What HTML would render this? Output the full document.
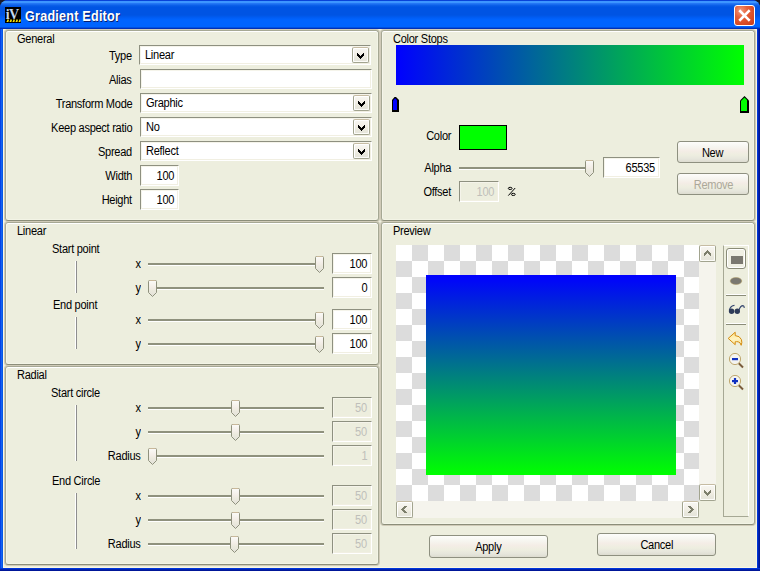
<!DOCTYPE html>
<html><head><meta charset="utf-8">
<style>
*{box-sizing:border-box;margin:0;padding:0}
html,body{width:760px;height:571px;overflow:hidden;background:#1a1a2a}
body{position:relative;font-family:"Liberation Sans",sans-serif;font-size:11px;color:#000}
.a{position:absolute}
#win{position:absolute;left:0;top:0;width:760px;height:571px;border-radius:8px 8px 0 0;overflow:hidden;background:#0054e3}
#title{position:absolute;left:0;top:0;width:760px;height:29px;background:linear-gradient(to bottom,#0842d8 0px,#0842d8 1px,#3d95ff 1px,#3d95ff 3px,#2a7cf8 3px,#0a5ee8 5.5px,#0054e3 7px,#0054e3 15px,#005ef6 18px,#0064ff 20px,#0064ff 27px,#0050e0 27px,#0050e0 28px,#0030b8 28px,#0030b8 29px)}
#frameL{position:absolute;left:0;top:29px;width:3px;height:542px;background:linear-gradient(to right,#0032e0,#1262f2 50%,#0050e0)}
#frameR{position:absolute;right:0;top:29px;width:3px;height:542px;background:linear-gradient(to right,#0040e8,#0022b0 50%,#00108c)}
#frameB{position:absolute;left:0;top:568px;width:760px;height:3px;background:linear-gradient(to bottom,#0040f0,#0022b0 50%,#00108c)}
#client{position:absolute;left:3px;top:29px;width:754px;height:539px;background:#edeede;border:1px solid #fbf7e2;border-top-color:#faf6e0}
.ttl{position:absolute;left:25px;top:8px;font-weight:bold;font-size:14px;color:#fff;text-shadow:1px 1px 0 #0a1e6e;letter-spacing:0.25px;line-height:17px;transform:scaleX(0.9);transform-origin:0 0}
.gb{position:absolute;border:1px solid #a6a894;border-bottom-color:#8c8e7a;border-radius:3px;box-shadow:0 0 0 1px #d0cbb8,inset 0 1px 0 #fff,inset 1px 0 0 #f5f5ea,inset -1px -1px 0 #f3f4e6}
.lbl{position:absolute;line-height:15px;white-space:nowrap;letter-spacing:-0.3px;font-size:12px;transform:scaleX(0.92);transform-origin:0 0}
.lbl.r{transform-origin:100% 0}
.t{display:inline-block;transform:scaleX(0.92);transform-origin:0 0}
.num .t{transform-origin:100% 0}
.btn .t{transform-origin:50% 0}
.r{text-align:right}
.tb{position:absolute;background:#fff;border:1px solid;border-color:#8e9080 #fff #fff #8e9080;box-shadow:inset 1px 1px 0 #f5f4ea,inset -1px -1px 0 #f1efe2;line-height:20px;white-space:nowrap;letter-spacing:-0.3px;font-size:12px}
.tb.num{text-align:right;padding-right:4px}
.tb.dis{background:#edeede;color:#bfbfba}
.cb{padding-left:5px;line-height:18px}
.dd{position:absolute;width:17px;height:16px;border:1px solid #a2a48f;border-top-color:#c6bca3;border-radius:2px;background:linear-gradient(to bottom,#f7f7f2 0%,#f4f1ea 35%,#efede2 55%,#e8e7dc 75%,#e6e5dc 100%);box-shadow:inset 1px 1px 0 #fff,inset -1px -1px 0 #fcfcf8}
.dd svg{position:absolute;left:4px;top:5px}
.vl{position:absolute;width:1px;background:#8e8e8e;box-shadow:-1px 0 0 #fff}
.trk{position:absolute;height:3px;border-top:2px solid #8f917d;border-bottom:1px solid #fff}
.btn{position:absolute;border:1px solid #8e9080;border-radius:3px;background:linear-gradient(to bottom,#fdfdfb 0%,#f6f5ef 25%,#f4ede6 45%,#eeeee0 65%,#e6e6dc 85%,#dddcd0 100%);text-align:center;letter-spacing:-0.3px;font-size:12px}
.chk{position:absolute;background:conic-gradient(#dcdcdc 0 25%,#fff 0 50%,#dcdcdc 0 75%,#fff 0);background-size:32px 32px}
.sbb{position:absolute;width:17px;height:17px;border:1px solid #a2a48f;border-top-color:#c6bca3;border-radius:2px;background:linear-gradient(to bottom,#f7f7f2 0%,#f4f1ea 35%,#efede2 55%,#e8e7dc 75%,#e6e5dc 100%);box-shadow:inset 1px 1px 0 #fff,inset -1px -1px 0 #fcfcf8}
.sbb svg{position:absolute;display:block}
</style></head><body>
<svg width="0" height="0" style="position:absolute"><defs><linearGradient id="tg" x1="0" y1="0" x2="0" y2="1"><stop offset="0" stop-color="#fbfbf8"/><stop offset="0.45" stop-color="#f3ede6"/><stop offset="0.6" stop-color="#eceade"/><stop offset="1" stop-color="#e2e1d8"/></linearGradient>
<g id="thumb"><path d="M0.5 1.5 Q0.5 0.5 1.5 0.5 H7.5 Q8.5 0.5 8.5 1.5 V12.5 L4.5 16.5 L0.5 12.5 Z" fill="url(#tg)" stroke="#8f917d"/><path d="M1.5 0.5 H7.5" stroke="#c9b89a"/></g></defs></svg>
<div id="win">
<div id="title"></div>
<div id="frameL"></div><div id="frameR"></div><div id="frameB"></div>
<div id="client"></div>

<!-- title icon -->
<svg class="a" style="left:5px;top:7px" width="16" height="16" viewBox="0 0 16 16">
<rect x="0" y="0" width="16" height="16" fill="#000"/>
<text x="0.8" y="11.9" font-family="Liberation Serif" font-weight="bold" font-size="14" fill="#c4d8ee" letter-spacing="-0.6">iV</text>
<g fill="#ffe800"><path d="M2.2 12.6h1.6v1.6l-0.8 0.8h-1.8l0.9-0.9z"/><path d="M5.2 12.6h1.6v1.6l-0.8 0.8h-1.8l0.9-0.9z"/><path d="M8.2 12.6h1.6v1.6l-0.8 0.8h-1.8l0.9-0.9z"/><path d="M11.2 12.6h1.6v1.6l-0.8 0.8h-1.8l0.9-0.9z"/><path d="M14.2 12.6h1.6v1.6l-0.8 0.8h-1.8l0.9-0.9z"/></g>
</svg>
<div class="ttl">Gradient Editor</div>

<!-- close button -->
<div class="a" style="left:734px;top:5px;width:21px;height:21px;border:1px solid #fff;border-radius:3px;background:radial-gradient(circle at 30% 25%,#f39a7c 0%,#e5603a 35%,#d84b24 70%,#c43c1a 100%)"></div>
<svg class="a" style="left:734px;top:5px" width="21" height="21" viewBox="0 0 21 21"><path d="M6.2 6.2 L14.8 14.8 M14.8 6.2 L6.2 14.8" stroke="#fff" stroke-width="2.6" stroke-linecap="square"/></svg>

<!-- group boxes -->
<div class="gb" style="left:5px;top:30px;width:374px;height:191px"></div>
<div class="gb" style="left:5px;top:222px;width:374px;height:143px"></div>
<div class="gb" style="left:5px;top:366px;width:374px;height:199px"></div>
<div class="gb" style="left:381px;top:30px;width:374px;height:191px"></div>
<div class="gb" style="left:381px;top:222px;width:374px;height:303px"></div>

<!-- General -->
<div class="lbl" style="left:17px;top:32px">General</div>
<div class="lbl r" style="right:628px;top:49px">Type</div>
<div class="lbl r" style="right:628px;top:73px">Alias</div>
<div class="lbl r" style="right:628px;top:97px">Transform Mode</div>
<div class="lbl r" style="right:628px;top:121px">Keep aspect ratio</div>
<div class="lbl r" style="right:628px;top:145px">Spread</div>
<div class="lbl r" style="right:628px;top:169px">Width</div>
<div class="lbl r" style="right:628px;top:193px">Height</div>

<div class="tb cb" style="left:139px;top:45px;width:232px;height:20px"><span class="t">Linear</span></div>
<div class="dd" style="left:352px;top:47px"><svg width="7" height="6" shape-rendering="crispEdges"><path d="M0 0h1v1h-1zM6 0h1v1h-1zM0 1h2v1h-2zM5 1h2v1h-2zM0 2h3v1h-3zM4 2h3v1h-3zM1 3h5v1h-5zM2 4h3v1h-3zM3 5h1v1h-1z"/></svg></div>
<div class="tb" style="left:140px;top:69px;width:232px;height:20px"></div>
<div class="tb cb" style="left:140px;top:93px;width:232px;height:20px"><span class="t">Graphic</span></div>
<div class="dd" style="left:353px;top:95px"><svg width="7" height="6" shape-rendering="crispEdges"><path d="M0 0h1v1h-1zM6 0h1v1h-1zM0 1h2v1h-2zM5 1h2v1h-2zM0 2h3v1h-3zM4 2h3v1h-3zM1 3h5v1h-5zM2 4h3v1h-3zM3 5h1v1h-1z"/></svg></div>
<div class="tb cb" style="left:140px;top:117px;width:232px;height:20px"><span class="t">No</span></div>
<div class="dd" style="left:353px;top:119px"><svg width="7" height="6" shape-rendering="crispEdges"><path d="M0 0h1v1h-1zM6 0h1v1h-1zM0 1h2v1h-2zM5 1h2v1h-2zM0 2h3v1h-3zM4 2h3v1h-3zM1 3h5v1h-5zM2 4h3v1h-3zM3 5h1v1h-1z"/></svg></div>
<div class="tb cb" style="left:140px;top:141px;width:232px;height:20px"><span class="t">Reflect</span></div>
<div class="dd" style="left:353px;top:143px"><svg width="7" height="6" shape-rendering="crispEdges"><path d="M0 0h1v1h-1zM6 0h1v1h-1zM0 1h2v1h-2zM5 1h2v1h-2zM0 2h3v1h-3zM4 2h3v1h-3zM1 3h5v1h-5zM2 4h3v1h-3zM3 5h1v1h-1z"/></svg></div>
<div class="tb num" style="left:140px;top:165px;width:39px;height:21px"><span class="t">100</span></div>
<div class="tb num" style="left:140px;top:189px;width:39px;height:21px"><span class="t">100</span></div>

<!-- Linear -->
<div class="lbl" style="left:17px;top:224px">Linear</div>
<div class="lbl" style="left:52px;top:242px">Start point</div>
<div class="vl" style="left:76px;top:261px;height:32px"></div>
<div class="lbl" style="left:53px;top:298px">End point</div>
<div class="vl" style="left:76px;top:317px;height:32px"></div>

<div class="lbl r" style="right:619px;top:257px">x</div>
<div class="trk" style="left:148px;top:263px;width:176px"></div>
<svg class="a thm" style="left:315px;top:256px" width="11" height="18"><use href="#thumb"/></svg>
<div class="tb num" style="left:332px;top:253px;width:40px;height:21px"><span class="t">100</span></div>
<div class="lbl r" style="right:619px;top:281px">y</div>
<div class="trk" style="left:148px;top:287px;width:176px"></div>
<svg class="a thm" style="left:148px;top:280px" width="11" height="18"><use href="#thumb"/></svg>
<div class="tb num" style="left:332px;top:277px;width:40px;height:21px"><span class="t">0</span></div>
<div class="lbl r" style="right:619px;top:313px">x</div>
<div class="trk" style="left:148px;top:319px;width:176px"></div>
<svg class="a thm" style="left:315px;top:312px" width="11" height="18"><use href="#thumb"/></svg>
<div class="tb num" style="left:332px;top:309px;width:40px;height:21px"><span class="t">100</span></div>
<div class="lbl r" style="right:619px;top:337px">y</div>
<div class="trk" style="left:148px;top:343px;width:176px"></div>
<svg class="a thm" style="left:315px;top:336px" width="11" height="18"><use href="#thumb"/></svg>
<div class="tb num" style="left:332px;top:333px;width:40px;height:21px"><span class="t">100</span></div>

<!-- Radial -->
<div class="lbl" style="left:17px;top:368px">Radial</div>
<div class="lbl" style="left:51px;top:386px">Start circle</div>
<div class="vl" style="left:76px;top:405px;height:56px"></div>
<div class="lbl" style="left:52px;top:474px">End Circle</div>
<div class="vl" style="left:76px;top:493px;height:56px"></div>

<div class="lbl r" style="right:619px;top:401px">x</div>
<div class="trk" style="left:148px;top:407px;width:176px"></div>
<svg class="a thm" style="left:231px;top:400px" width="11" height="18"><use href="#thumb"/></svg>
<div class="tb num dis" style="left:332px;top:397px;width:40px;height:21px"><span class="t">50</span></div>
<div class="lbl r" style="right:619px;top:425px">y</div>
<div class="trk" style="left:148px;top:431px;width:176px"></div>
<svg class="a thm" style="left:231px;top:424px" width="11" height="18"><use href="#thumb"/></svg>
<div class="tb num dis" style="left:332px;top:421px;width:40px;height:21px"><span class="t">50</span></div>
<div class="lbl r" style="right:619px;top:449px">Radius</div>
<div class="trk" style="left:148px;top:455px;width:176px"></div>
<svg class="a thm" style="left:148px;top:448px" width="11" height="18"><use href="#thumb"/></svg>
<div class="tb num dis" style="left:332px;top:445px;width:40px;height:21px"><span class="t">1</span></div>
<div class="lbl r" style="right:619px;top:489px">x</div>
<div class="trk" style="left:148px;top:495px;width:176px"></div>
<svg class="a thm" style="left:231px;top:488px" width="11" height="18"><use href="#thumb"/></svg>
<div class="tb num dis" style="left:332px;top:485px;width:40px;height:21px"><span class="t">50</span></div>
<div class="lbl r" style="right:619px;top:513px">y</div>
<div class="trk" style="left:148px;top:519px;width:176px"></div>
<svg class="a thm" style="left:231px;top:512px" width="11" height="18"><use href="#thumb"/></svg>
<div class="tb num dis" style="left:332px;top:509px;width:40px;height:21px"><span class="t">50</span></div>
<div class="lbl r" style="right:619px;top:537px">Radius</div>
<div class="trk" style="left:148px;top:543px;width:176px"></div>
<svg class="a thm" style="left:230px;top:536px" width="11" height="18"><use href="#thumb"/></svg>
<div class="tb num dis" style="left:332px;top:533px;width:40px;height:21px"><span class="t">50</span></div>

<!-- Color Stops -->
<div class="lbl" style="left:393px;top:32px">Color Stops</div>
<div class="a" style="left:396px;top:45px;width:348px;height:40px;background:linear-gradient(to right,#0000ff,#00ff00)"></div>
<svg class="a" style="left:392px;top:97px" width="7" height="15" viewBox="0 0 7 15"><path d="M0 3 L2.5 0 H4 L7 3 V15 H0 Z" fill="#000"/><path d="M1 3.6 L2.9 1.6 H3.6 L5 3.2 V13 H1 Z" fill="#0000ff"/></svg>
<svg class="a" style="left:740px;top:96px" width="9" height="17" viewBox="0 0 9 17"><path d="M0 4.5 L4.5 0 L9 4.5 V17 H0 Z" fill="#000"/><path d="M1 4.9 L4.5 1.5 L7 4 V15 H1 Z" fill="#00ff00"/></svg>
<div class="lbl r" style="right:309px;top:129px">Color</div>
<div class="a" style="left:459px;top:125px;width:48px;height:25px;border:1px solid #000;background:#00ff00"></div>
<div class="lbl r" style="right:309px;top:161px">Alpha</div>
<div class="trk" style="left:459px;top:167px;width:130px"></div>
<svg class="a" style="left:585px;top:160px" width="11" height="18"><use href="#thumb"/></svg>
<div class="tb num" style="left:603px;top:157px;width:57px;height:21px"><span class="t">65535</span></div>
<div class="lbl r" style="right:309px;top:185px">Offset</div>
<div class="tb num dis" style="left:459px;top:181px;width:40px;height:21px"><span class="t">100</span></div>
<svg class="a" style="left:507px;top:186px" width="10" height="11" viewBox="0 0 10 11"><ellipse cx="3.2" cy="2.4" rx="1.9" ry="1.1" fill="none" stroke="#000" stroke-width="1"/><ellipse cx="6.3" cy="8.4" rx="1.9" ry="1.1" fill="none" stroke="#000" stroke-width="1"/><path d="M1.3 9.6 L8.2 2" stroke="#000" stroke-width="1"/></svg>
<div class="btn" style="left:677px;top:141px;width:72px;height:22px;line-height:22px"><span class="t">New</span></div>
<div class="btn" style="left:677px;top:173px;width:72px;height:22px;line-height:22px;color:#aca899"><span class="t">Remove</span></div>

<!-- Preview -->
<div class="lbl" style="left:393px;top:224px">Preview</div>
<div class="chk" style="left:396px;top:245px;width:303px;height:256px"></div>
<div class="a" style="left:426px;top:275px;width:250px;height:200px;background:linear-gradient(to bottom,#0000ff,#00ff00)"></div>
<!-- scrollbars -->
<div class="a" style="left:699px;top:245px;width:17px;height:256px;background:#f5f4ed"></div>
<div class="a" style="left:396px;top:501px;width:303px;height:17px;background:#f5f4ed"></div>
<div class="sbb" style="left:699px;top:245px"><svg style="left:4px;top:4px" width="7" height="6" shape-rendering="crispEdges"><path fill="#7d7f6c" d="M3 0h1v1h-1zM2 1h3v1h-3zM1 2h5v1h-5zM0 3h3v1h-3zM4 3h3v1h-3zM0 4h2v1h-2zM5 4h2v1h-2zM0 5h1v1h-1zM6 5h1v1h-1z"/></svg></div>
<div class="sbb" style="left:699px;top:484px"><svg style="left:4px;top:5px" width="7" height="6" shape-rendering="crispEdges"><path fill="#7d7f6c" d="M0 0h1v1h-1zM6 0h1v1h-1zM0 1h2v1h-2zM5 1h2v1h-2zM0 2h3v1h-3zM4 2h3v1h-3zM1 3h5v1h-5zM2 4h3v1h-3zM3 5h1v1h-1z"/></svg></div>
<div class="sbb" style="left:396px;top:501px"><svg style="left:4px;top:4px" width="6" height="7" shape-rendering="crispEdges"><path fill="#7d7f6c" d="M3 0h3v1h-3zM2 1h3v1h-3zM1 2h3v1h-3zM0 3h3v1h-3zM1 4h3v1h-3zM2 5h3v1h-3zM3 6h3v1h-3z"/></svg></div>
<div class="sbb" style="left:682px;top:501px"><svg style="left:5px;top:4px" width="6" height="7" shape-rendering="crispEdges"><path fill="#7d7f6c" d="M0 0h3v1h-3zM1 1h3v1h-3zM2 2h3v1h-3zM3 3h3v1h-3zM2 4h3v1h-3zM1 5h3v1h-3zM0 6h3v1h-3z"/></svg></div>
<!-- toolbar -->
<div class="a" style="left:723px;top:245px;width:26px;height:272px;border-left:1px solid #a6a894;border-top:1px solid #fff;border-right:1px solid #fff;border-bottom:1px solid #a6a894"></div>
<div class="a" style="left:726px;top:248px;width:20px;height:21px;border:1px solid #8a8c78;border-radius:3px;box-shadow:inset 0 0 0 1px #fff;background:#f0f0e4"></div>
<div class="a" style="left:731px;top:256px;width:12px;height:8px;background:#7a7870"></div>
<svg class="a" style="left:728px;top:276px" width="16" height="10" viewBox="0 0 16 10"><ellipse cx="8" cy="5" rx="5.8" ry="3.5" fill="#7a7870" stroke="#b09a60" stroke-width="0.5"/></svg>
<div class="a" style="left:726px;top:295px;width:20px;height:1px;background:#8a8c78;box-shadow:0 -1px 0 #fff"></div>
<svg class="a" style="left:728px;top:303px" width="18" height="13" viewBox="0 0 18 13"><path d="M1.2 7.5 Q2.5 2.6 6.5 2.4 M10.8 7.5 Q12.3 2.6 15 2.6 Q16.4 2.8 16.2 5" fill="none" stroke="#34466e" stroke-width="1.1"/><circle cx="3.6" cy="8.2" r="2.7" fill="#2e3b58"/><circle cx="9.3" cy="8.2" r="2.7" fill="#2e3b58"/></svg>
<div class="a" style="left:726px;top:324px;width:20px;height:1px;background:#8a8c78;box-shadow:0 -1px 0 #fff"></div>
<svg class="a" style="left:727px;top:331px" width="18" height="16" viewBox="0 0 18 16"><defs><linearGradient id="ug" x1="0" y1="0" x2="0.3" y2="1"><stop offset="0" stop-color="#fde58a"/><stop offset="0.6" stop-color="#fff3c0"/><stop offset="1" stop-color="#fbe7a0"/></linearGradient></defs><path d="M1.2 7.4 L8.2 1.2 V4.6 Q12.8 4.8 14.4 8.5 Q15.4 11.5 14.2 14.3 Q13.4 11.2 11.2 10.8 Q9.6 10.5 8.2 10.8 V13.7 Z" fill="url(#ug)" stroke="#d48c10" stroke-width="1" stroke-linejoin="round"/></svg>
<svg class="a" style="left:727px;top:351px" width="18" height="18" viewBox="0 0 18 18"><line x1="11.5" y1="12" x2="16" y2="16.5" stroke="#7a5c3c" stroke-width="2"/><circle cx="8" cy="8" r="5.6" fill="#f4f4f0" stroke="#c0a870" stroke-width="1"/><rect x="5" y="7" width="6" height="2.2" fill="#1030c0"/></svg>
<svg class="a" style="left:727px;top:373px" width="18" height="18" viewBox="0 0 18 18"><line x1="11.5" y1="12" x2="16" y2="16.5" stroke="#7a5c3c" stroke-width="2"/><circle cx="8" cy="8" r="5.6" fill="#f4f4f0" stroke="#c0a870" stroke-width="1"/><rect x="5" y="7" width="6" height="2.2" fill="#1030c0"/><rect x="6.9" y="5" width="2.2" height="6" fill="#1030c0"/></svg>

<!-- Buttons -->
<div class="btn" style="left:429px;top:535px;width:119px;height:23px;line-height:23px"><span class="t">Apply</span></div>
<div class="btn" style="left:597px;top:533px;width:119px;height:23px;line-height:23px"><span class="t">Cancel</span></div>
</div>
</body></html>
